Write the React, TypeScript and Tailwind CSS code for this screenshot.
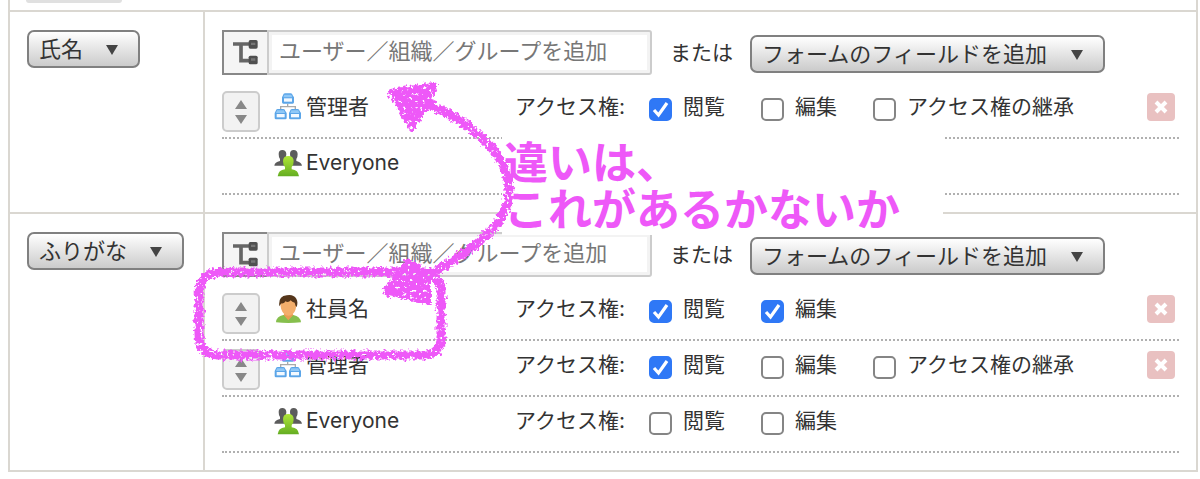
/**
 * フィールドのアクセス権設定
 * フィールドごとに、ユーザー／組織／グループの閲覧・編集権限を並べる
 */

import { useState } from 'react';

type EntityKind = 'organization' | 'user' | 'everyone';

interface Permission {
  label: string;
  checked: boolean;
}

interface Entity {
  id: string;
  kind: EntityKind;
  name: string;
  permissions: Permission[];
}

interface FieldRight {
  id: string;
  field: string;
  entities: Entity[];
}

const INITIAL_RIGHTS: FieldRight[] = [
  {
    id: 'name',
    field: '氏名',
    entities: [
      {
        id: 'name-admin',
        kind: 'organization',
        name: '管理者',
        permissions: [
          { label: '閲覧', checked: true },
          { label: '編集', checked: false },
          { label: 'アクセス権の継承', checked: false },
        ],
      },
      { id: 'name-everyone', kind: 'everyone', name: 'Everyone', permissions: [] },
    ],
  },
  {
    id: 'kana',
    field: 'ふりがな',
    entities: [
      {
        id: 'kana-employee',
        kind: 'user',
        name: '社員名',
        permissions: [
          { label: '閲覧', checked: true },
          { label: '編集', checked: true },
        ],
      },
      {
        id: 'kana-admin',
        kind: 'organization',
        name: '管理者',
        permissions: [
          { label: '閲覧', checked: true },
          { label: '編集', checked: false },
          { label: 'アクセス権の継承', checked: false },
        ],
      },
      {
        id: 'kana-everyone',
        kind: 'everyone',
        name: 'Everyone',
        permissions: [
          { label: '閲覧', checked: false },
          { label: '編集', checked: false },
        ],
      },
    ],
  },
];

function TreeIcon() {
  return (
    <svg viewBox="0 0 75 75" className="w-[25px] h-[25px]" aria-hidden="true">
      <path d="M0 12H50M24 12V62H50" fill="none" stroke="#666" strokeWidth="11" />
      <rect x="47" y="0" width="27" height="26" rx="5" fill="#505050" />
      <rect x="47" y="47" width="27" height="26" rx="5" fill="#505050" />
      <path d="M54 8H67V15H54ZM54 55H67V62H54Z" fill="#777" />
    </svg>
  );
}

function OrganizationIcon() {
  return (
    <svg viewBox="0 0 84 84" className="w-7 h-7" aria-hidden="true">
      <path d="M41 32V41M20 48V41H64V48" fill="none" stroke="#aaa" strokeWidth="4" />
      {['translate(23 0)', 'translate(1 47)', 'translate(44 47)'].map((t) => (
        <g key={t} transform={t}>
          <path d="M4 7Q5 1 10 1H27Q32 1 33 7L37 13V28Q37 32 33 32H5Q1 32 1 28V13Z" fill="#5ba5e8" />
          <path d="M8 5H29L32 13H5Z" fill="#8fc8f7" />
          <rect x="7" y="16" width="24" height="10" fill="#f3f9ff" />
        </g>
      ))}
    </svg>
  );
}

function UserIcon() {
  return (
    <svg viewBox="0 0 84 84" className="w-7 h-7" aria-hidden="true">
      <path d="M6 82Q7 64 28 60H58Q79 64 81 82Q43 86 6 82Z" fill="#86bf4d" />
      <path d="M29 60L43 76L58 60L52 52H34Z" fill="#e99d53" />
      <path d="M19 24Q19 7 43 7Q67 7 67 26Q67 47 57 56Q43 68 30 56Q19 46 19 24Z" fill="#f3ae6b" />
      <path d="M16 34Q12 3 38 1Q58 -3 67 11Q73 21 68 36Q64 33 62 23Q54 22 50 16Q44 24 34 19Q32 26 23 25Q19 28 16 34Z" fill="#55361b" />
    </svg>
  );
}

function EveryoneIcon() {
  return (
    <svg viewBox="0 0 84 84" className="w-7 h-7" aria-hidden="true">
      <defs>
        <linearGradient id="everyoneGreen" x1="0" y1="0" x2="0" y2="1">
          <stop offset="0" stopColor="#b0e638" />
          <stop offset="1" stopColor="#64ad22" />
        </linearGradient>
      </defs>
      <g fill="#5c5c5c">
        <path d="M14 15Q14 3 25 3T37 15Q37 27 32 31V38L43 50H1Q2 39 18 36V30Q14 26 14 15Z" />
        <path d="M48 15Q48 3 59 3T71 15Q71 26 67 30V36Q82 39 84 50H42L53 38V31Q48 27 48 15Z" />
      </g>
      <path
        d="M27 37Q27 21 43 21T59 37Q59 48 53 54V61Q73 63 75 82H11Q13 63 33 61V54Q27 48 27 37Z"
        fill="url(#everyoneGreen)"
      />
    </svg>
  );
}

const ENTITY_ICONS = {
  organization: OrganizationIcon,
  user: UserIcon,
  everyone: EveryoneIcon,
};

function DropDown({ label, text }: { label: string; text: string }) {
  return (
    <div className="relative inline-block align-top">
      <select
        aria-label={label}
        className="block appearance-none h-[38px] pl-[10px] pr-[54px] text-[22px] leading-[34px] border-2 border-[#808080] rounded-[7px] bg-linear-to-b from-white to-[#cbcbcb]"
      >
        <option>{text}</option>
      </select>
      <svg
        viewBox="0 0 12 10"
        className="absolute right-[22px] top-[15px] w-3 h-[10px] pointer-events-none"
        aria-hidden="true"
      >
        <path d="M0 0H12L6 10Z" fill="#444" />
      </svg>
    </div>
  );
}

function PermissionCheck({ permission, onToggle }: { permission: Permission; onToggle: () => void }) {
  return (
    <label className="flex items-center gap-[11px] h-8 whitespace-nowrap">
      <span className="grid place-items-center shrink-0 mt-1">
        <input
          type="checkbox"
          checked={permission.checked}
          onChange={onToggle}
          className="peer appearance-none col-start-1 row-start-1 w-[23px] h-[23px] bg-white border-2 border-[#858585] rounded-[5px] checked:bg-[#2f78f6] checked:border-[#2f78f6]"
        />
        <svg
          viewBox="0 0 23 23"
          className="hidden peer-checked:block col-start-1 row-start-1 w-[23px] h-[23px] pointer-events-none"
          aria-hidden="true"
        >
          <path d="M5 12L9.500 17L18 5" fill="none" stroke="#fff" strokeWidth="3.200" />
        </svg>
      </span>
      {permission.label}
    </label>
  );
}

function EntityRow({ entity, onToggle }: { entity: Entity; onToggle: (label: string) => void }) {
  const Icon = ENTITY_ICONS[entity.kind];
  const fixed = entity.kind === 'everyone';

  return (
    <li className="grid grid-cols-[52px_241px_134px_112px_112px_1fr_28px] items-start h-14 pt-2 pr-1 border-b-2 border-dotted border-[#b0b0b0] leading-8">
      <div>
        {!fixed && (
          <button
            type="button"
            aria-label="並べ替え"
            className="flex items-center justify-center w-[38px] h-[41px] bg-[#f2f2f2] border-2 border-[#ccc] rounded-[5px]"
          >
            <svg viewBox="0 0 12 24" className="w-3 h-6" aria-hidden="true">
              <path d="M0 9L6 0L12 9ZM0 15H12L6 24Z" fill="#888" />
            </svg>
          </button>
        )}
      </div>
      <div className="flex items-center gap-1 h-8">
        <Icon />
        <span>{entity.name}</span>
      </div>
      <div>{entity.permissions.length > 0 && 'アクセス権:'}</div>
      {entity.permissions.map((p) => (
        <PermissionCheck key={p.label} permission={p} onToggle={() => onToggle(p.label)} />
      ))}
      {!fixed && (
        <div className="col-start-7 flex items-center h-8">
          <button
            type="button"
            aria-label="削除"
            className="flex items-center justify-center w-7 h-7 bg-[#e9c1c1] rounded-[4px]"
          >
            <svg viewBox="0 0 14 14" className="w-[14px] h-[14px]" aria-hidden="true">
              <path d="M2 2L12 12M12 2L2 12" stroke="#fff" strokeWidth="4" />
            </svg>
          </button>
        </div>
      )}
    </li>
  );
}

/* 手書きのメモ（囲み・矢印・コメント） */
function HandNote() {
  return (
    <div className="absolute inset-0 overflow-hidden pointer-events-none text-[#ee58f8]">
      <div className="absolute left-[502px] top-[136px] w-[441px] h-[99px] pl-[2px] pt-1 bg-white text-[44px] leading-[47px] font-bold whitespace-nowrap">
        <p>
          違いは、
          <br />
          これがあるかないか
        </p>
      </div>
      <svg viewBox="0 0 1200 479" className="absolute left-0 top-0 w-[1200px] h-[479px]" aria-hidden="true">
        <defs>
          <filter
            id="crayon"
            x="180"
            y="60"
            width="360"
            height="320"
            filterUnits="userSpaceOnUse"
            colorInterpolationFilters="sRGB"
          >
            <feTurbulence type="fractalNoise" baseFrequency="0.3" numOctaves="3" seed="4" result="noise" />
            <feDisplacementMap in="SourceGraphic" in2="noise" scale="8" xChannelSelector="R" yChannelSelector="G" result="rough" />
            <feColorMatrix in="noise" type="matrix" values="0 0 0 0 0  0 0 0 0 0  0 0 0 0 0  0 0 10 0 -2.6" result="holes" />
            <feComposite in="rough" in2="holes" operator="in" />
          </filter>
        </defs>
        <g filter="url(#crayon)" fill="none" stroke="currentColor" strokeWidth="9" strokeLinecap="round" strokeLinejoin="round">
          <path d="M441 308V292Q441 277 426 272H222Q199 272 199 296V334Q199 355 218 355H422Q441 355 441 338V316" />
          <path d="M424 102C468 121 509 151 509 191C509 225 474 249 432 273" />
          <path d="M391 92L434 85L428 103L412 128Z" fill="currentColor" strokeWidth="6" />
          <path d="M408 261L428 274L428 302L385 292Z" fill="currentColor" strokeWidth="6" />
        </g>
      </svg>
    </div>
  );
}

export default function App() {
  const [rights, setRights] = useState<FieldRight[]>(INITIAL_RIGHTS);

  const togglePermission = (entityId: string, label: string) => {
    setRights((prev) =>
      prev.map((r) => ({
        ...r,
        entities: r.entities.map((e) =>
          e.id === entityId
            ? { ...e, permissions: e.permissions.map((p) => (p.label === label ? { ...p, checked: !p.checked } : p)) }
            : e
        ),
      }))
    );
  };

  return (
    <div className="relative bg-white text-[#333] text-[21px] font-['Inter','Noto_Sans_CJK_JP',sans-serif]">
      <div className="pl-2 pr-[2px] pb-[7px]">
        <div className="h-[10px] px-4 border-x-2 border-[#dad7d1]">
          <div className="w-24 h-[3px] bg-[#e0e0e0] rounded-b-lg" />
        </div>
        <table className="w-full border-separate border-spacing-0 border-l-2 border-t-2 border-[#dad7d1]">
          <tbody>
            {rights.map((r) => (
              <tr key={r.id}>
                <td className="w-[195px] px-[17px] py-[18px] align-top border-r-2 border-b-2 border-[#dad7d1]">
                  <DropDown label="フィールド" text={r.field} />
                </td>
                <td className="px-[17px] pt-[18px] pb-[17px] align-top border-r-2 border-b-2 border-[#dad7d1]">
                  <div className="flex items-start mb-2">
                    <button
                      type="button"
                      aria-label="組織から選択"
                      className="flex items-center justify-center shrink-0 w-[45px] h-[45px] bg-[#f5f5f5] border-2 border-r-0 border-[#888]"
                    >
                      <TreeIcon />
                    </button>
                    <input
                      type="text"
                      aria-label="ユーザー／組織／グループを追加"
                      placeholder="ユーザー／組織／グループを追加"
                      className="w-[385px] h-[45px] px-[10px] pb-1 text-[22px] bg-white border-2 border-[#ccc] rounded-r-[3px] shadow-[inset_0_0_0_3px_#f3f3f3] placeholder:text-[#777]"
                    />
                    <div className="flex gap-[17px] pl-[18px] pt-[5px]">
                      <span className="leading-9 whitespace-nowrap">または</span>
                      <DropDown label="フォームのフィールド" text="フォームのフィールドを追加" />
                    </div>
                  </div>
                  <ul>
                    {r.entities.map((e) => (
                      <EntityRow key={e.id} entity={e} onToggle={(label) => togglePermission(e.id, label)} />
                    ))}
                  </ul>
                </td>
              </tr>
            ))}
          </tbody>
        </table>
      </div>
      <HandNote />
    </div>
  );
}
